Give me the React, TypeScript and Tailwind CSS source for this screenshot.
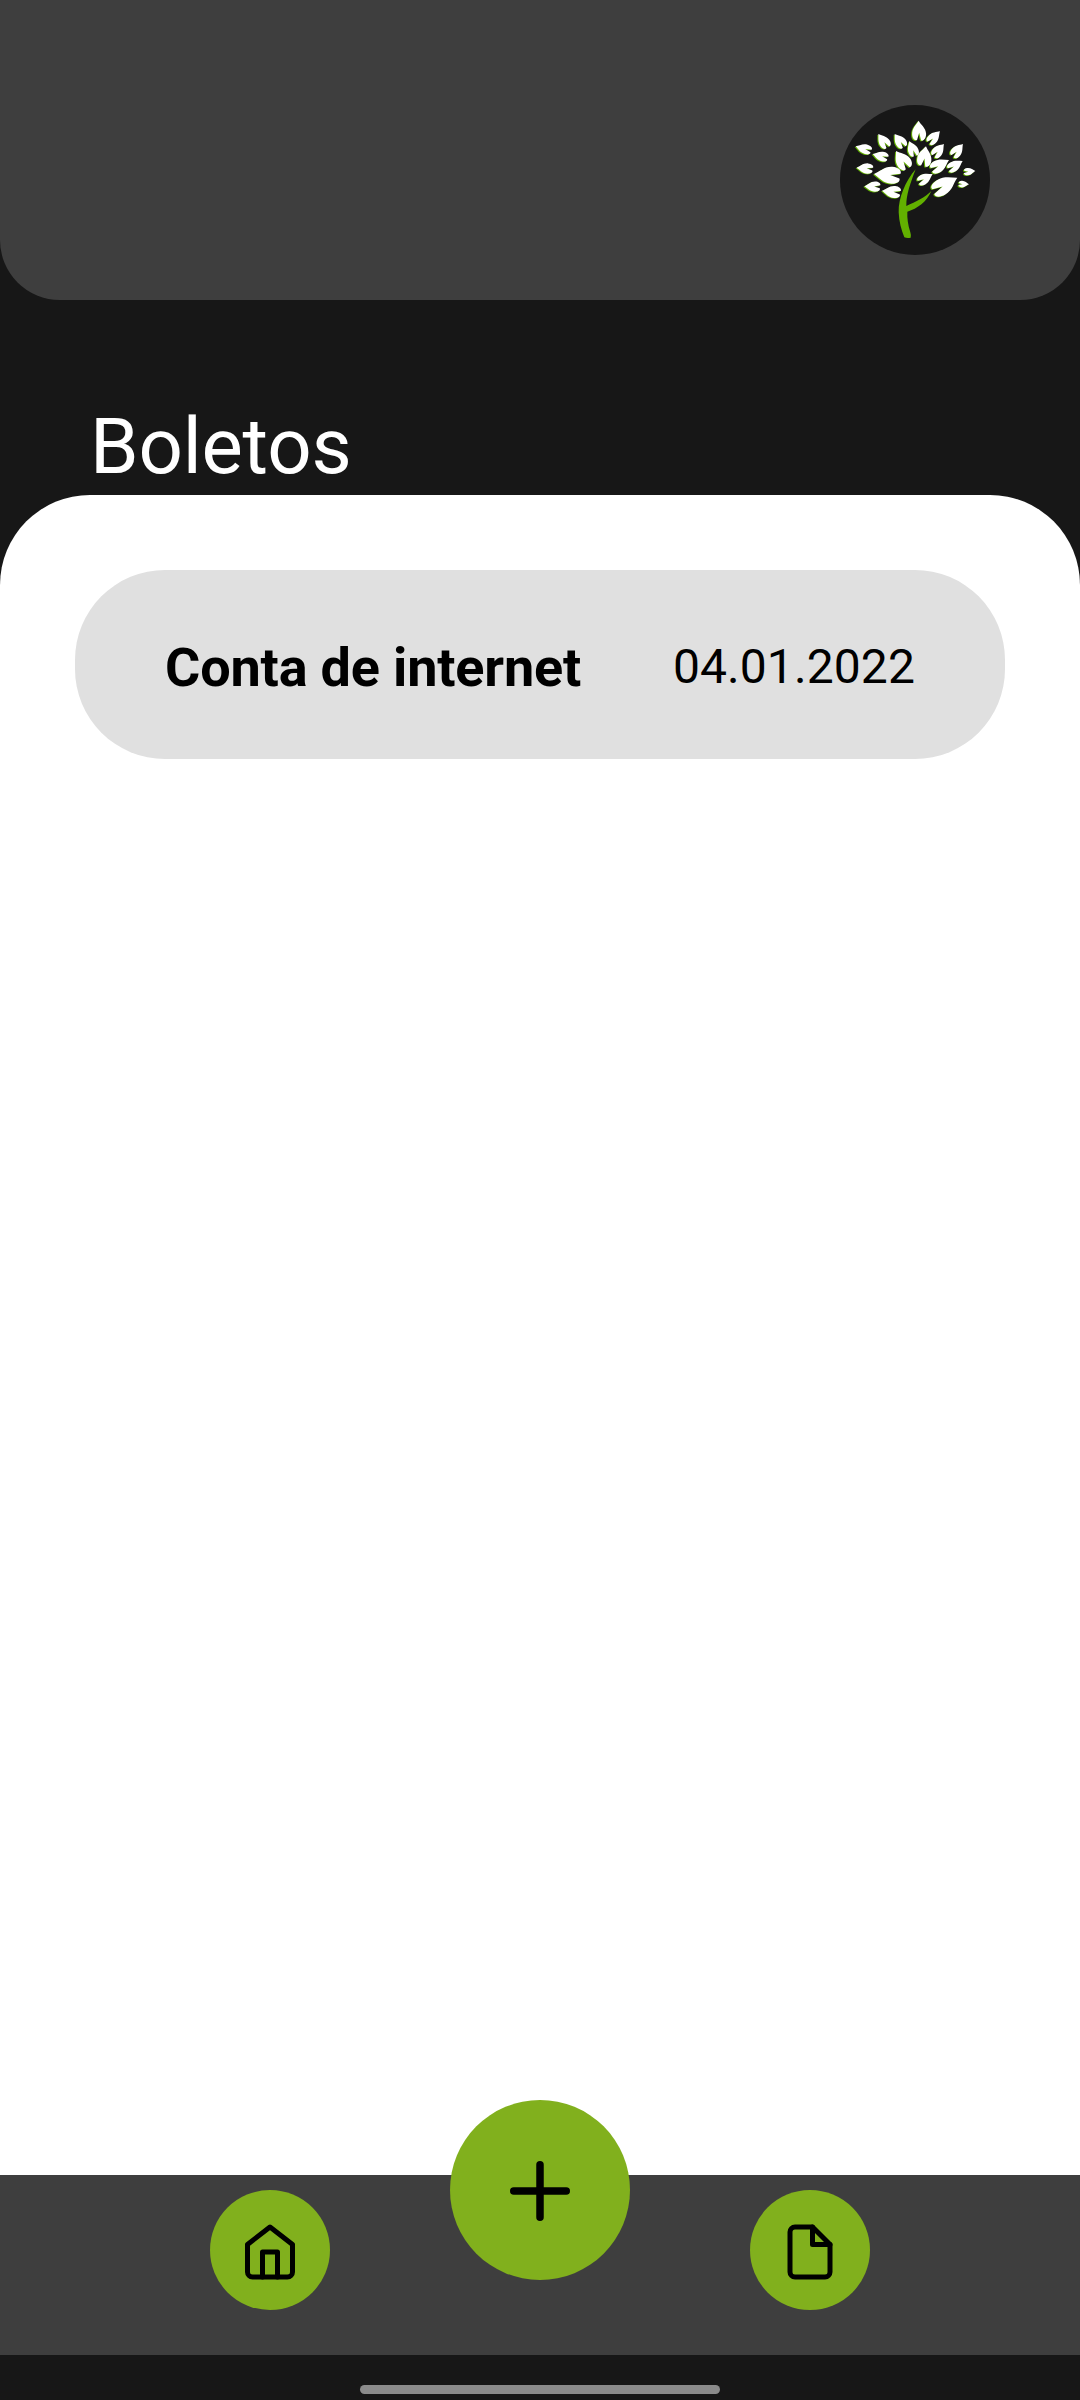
import React from "react";

type Leaf = { x: number; y: number; bx: number; by: number; w: number };

// Each leaf runs from its tip (x, y) to its base (bx, by), w units wide.
const leaves: Leaf[] = [
  { x: 265, y: 77, bx: 267, by: 138, w: 42 },
  { x: 329, y: 109, bx: 294, by: 145, w: 31 },
  { x: 144, y: 117, bx: 174, by: 158, w: 32 },
  { x: 193, y: 117, bx: 223, by: 157, w: 32 },
  { x: 76, y: 154, bx: 124, by: 168, w: 29 },
  { x: 127, y: 177, bx: 174, by: 189, w: 29 },
  { x: 237, y: 138, bx: 256, by: 184, w: 31 },
  { x: 197, y: 168, bx: 234, by: 221, w: 44 },
  { x: 287, y: 154, bx: 279, by: 215, w: 43 },
  { x: 341, y: 147, bx: 309, by: 185, w: 32 },
  { x: 398, y: 147, bx: 366, by: 185, w: 32 },
  { x: 356, y: 195, bx: 302, by: 226, w: 38 },
  { x: 397, y: 198, bx: 353, by: 225, w: 31 },
  { x: 435, y: 228, bx: 400, by: 231, w: 22 },
  { x: 416, y: 268, bx: 384, by: 267, w: 20 },
  { x: 307, y: 237, bx: 263, by: 263, w: 31 },
  { x: 381, y: 248, bx: 307, by: 292, w: 50 },
  { x: 131, y: 237, bx: 212, by: 243, w: 51 },
  { x: 79, y: 218, bx: 129, by: 222, w: 31 },
  { x: 102, y: 274, bx: 151, by: 275, w: 31 },
  { x: 155, y: 287, bx: 212, by: 293, w: 36 },
];

const leafPath =
  "M0 0C.2-.14.36-.5.66-.5C.86-.5 1.02-.34 .98-.13L.6-.01L.95.16C1 .34.86.5.66.5C.36.5.2.2 0 0Z";

function Leaves() {
  return (
    <>
      {leaves.map((l, i) => {
        const dx = l.bx - l.x;
        const dy = l.by - l.y;
        const angle = (Math.atan2(dy, dx) * 180) / Math.PI;
        return (
          <path
            key={i}
            d={leafPath}
            transform={`translate(${l.x} ${l.y}) rotate(${angle}) scale(${Math.hypot(dx, dy)} ${l.w})`}
          />
        );
      })}
    </>
  );
}

function TreeLogo() {
  return (
    <svg viewBox="30 30 450 450" className="size-[150px]">
      <g fill="#62b000">
        <g transform="translate(-2 2)">
          <Leaves />
        </g>
        <path d="M257 223C226 258 205 310 206 352C207 380 214 405 223 427Q232 431 242 428Q244 421 241 412C234 390 231 370 232 350C262 341 291 320 304 288C285 307 258 320 229 333C228 300 242 262 257 223Z" />
      </g>
      <g fill="#fff" transform="translate(1 0)">
        <Leaves />
      </g>
    </svg>
  );
}

function Icon({ className, children }: { className: string; children: React.ReactNode }) {
  return (
    <svg
      viewBox="0 0 24 24"
      fill="none"
      stroke="#000"
      strokeWidth="2"
      strokeLinecap="round"
      strokeLinejoin="round"
      className={className}
    >
      {children}
    </svg>
  );
}

export default function App() {
  return (
    <div className="flex h-[2400px] w-[1080px] flex-col overflow-hidden bg-[#171717] font-['Roboto',sans-serif] text-black">
      <header className="flex h-[300px] shrink-0 items-start justify-end rounded-b-[60px] bg-[#3e3e3e] pt-[105px] pr-[90px]">
        <div className="size-[150px] rounded-full bg-[#171717]">
          <TreeLogo />
        </div>
      </header>

      <h1 className="h-[195px] shrink-0 pt-[101px] pl-[90px] text-[78px] leading-[92px] tracking-[-0.2px] text-white">Boletos</h1>

      <main className="flex-1 rounded-t-[90px] bg-white px-[75px] pt-[75px]">
        <div className="flex h-[189px] items-baseline justify-between rounded-[90px] bg-[#e0e0e0] px-[90px] pt-[66px]">
          <span className="text-[54px] leading-[64px] font-bold tracking-[-0.18px]">Conta de internet</span>
          <span className="relative -top-[3px] text-[48px] leading-[56px] tracking-[0.1px]">04.01.2022</span>
        </div>
      </main>

      <nav className="flex h-[180px] shrink-0 items-start justify-center gap-[120px] bg-[#3e3e3e]">
        <button className="mt-[15px] flex size-[120px] items-start justify-center rounded-full bg-[#81b01d] pt-[31.5px]">
          <Icon className="size-[60px]">
            <path d="M3 9l9-7 9 7v11a2 2 0 0 1-2 2H5a2 2 0 0 1-2-2z" />
            <path d="M9 22V12h6v10" />
          </Icon>
        </button>
        <button className="-mt-[75px] flex size-[180px] items-start justify-center rounded-full bg-[#81b01d] pt-[46px]">
          <Icon className="size-[90px]">
            <path d="M12 5v14M5 12h14" />
          </Icon>
        </button>
        <button className="mt-[15px] flex size-[120px] items-start justify-center rounded-full bg-[#81b01d] pt-[31.5px]">
          <Icon className="size-[60px]">
            <path d="M13 2H6a2 2 0 0 0-2 2v16a2 2 0 0 0 2 2h12a2 2 0 0 0 2-2V9z" />
            <path d="M13 2v7h7" />
          </Icon>
        </button>
      </nav>

      <footer className="flex h-[45px] shrink-0 justify-center pt-[30px]">
        <div className="h-[9px] w-[360px] rounded-full bg-[#8b8b8b]" />
      </footer>
    </div>
  );
}
